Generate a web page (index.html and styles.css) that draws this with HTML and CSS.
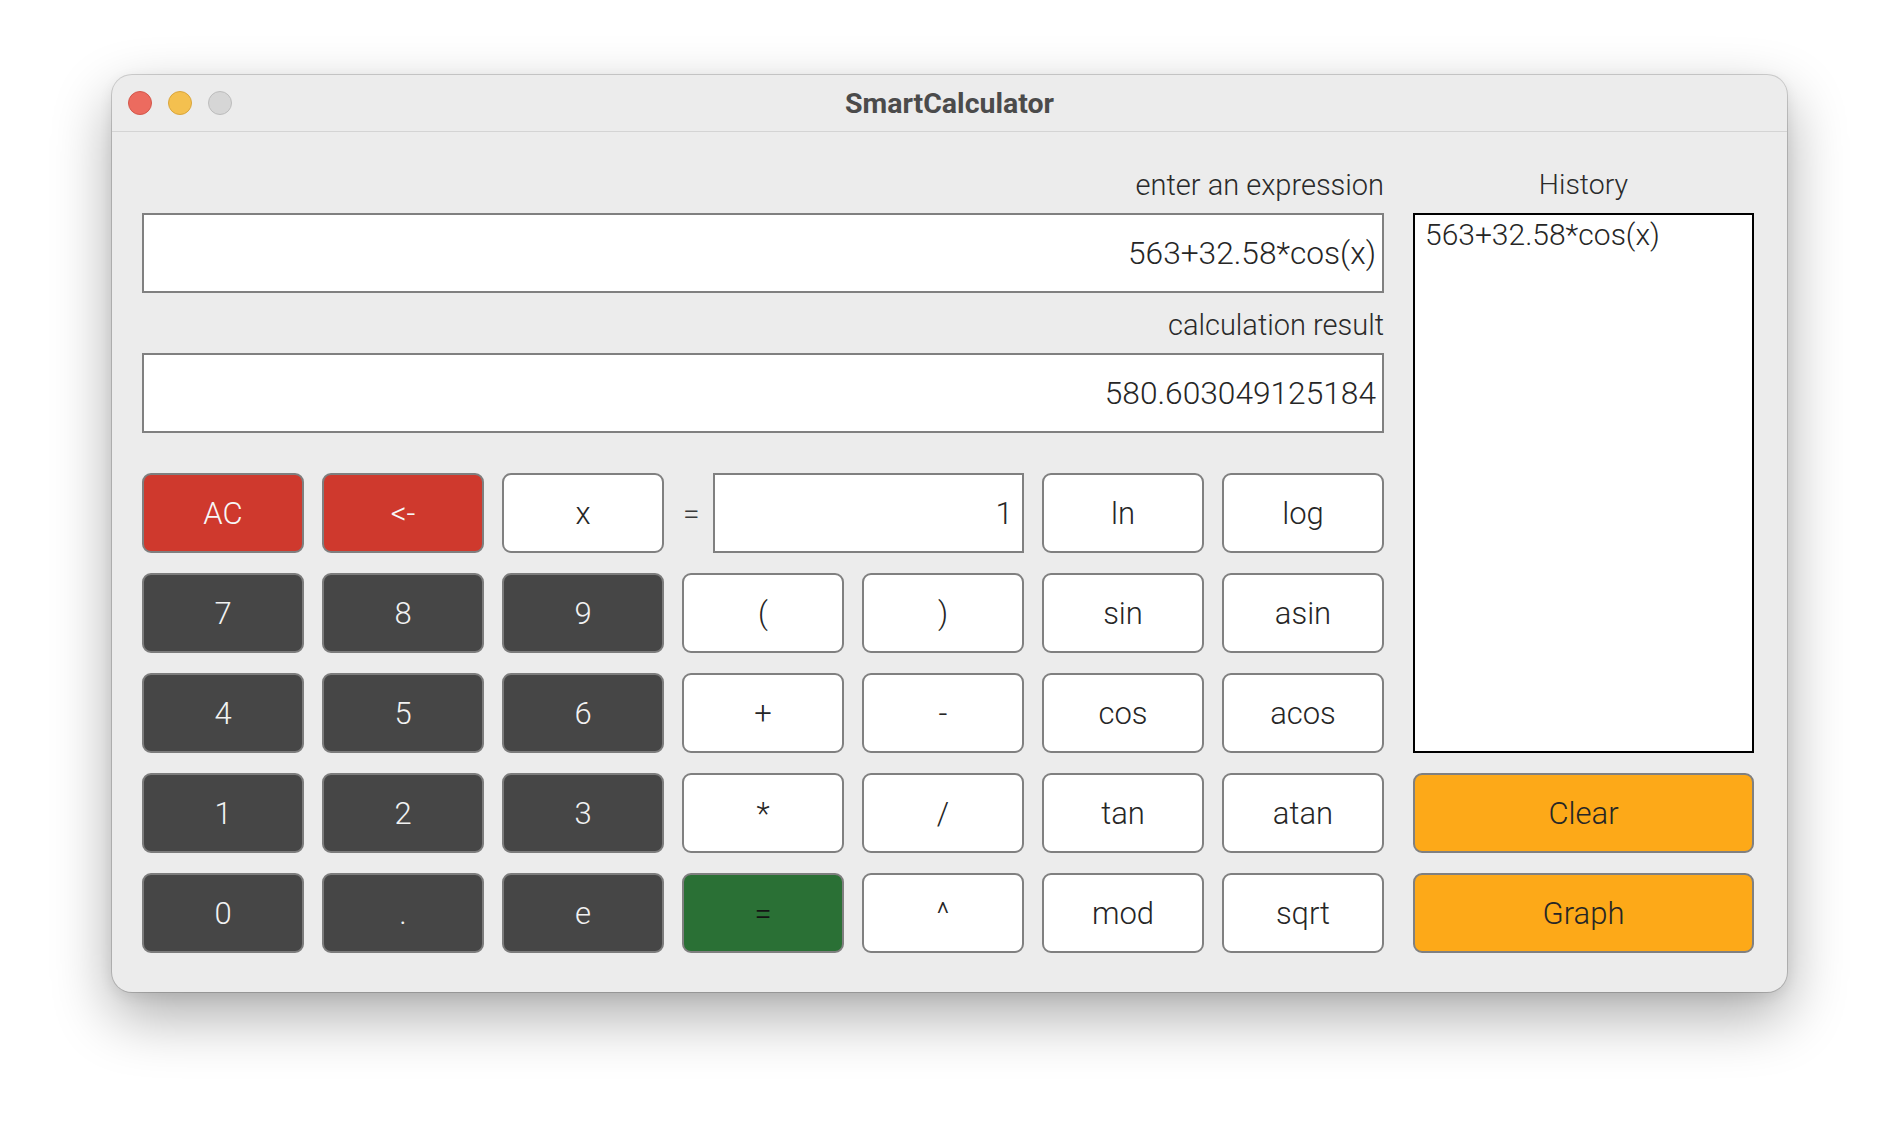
FILE: index.html
```html
<!DOCTYPE html>
<html>
<head>
<meta charset="utf-8">
<title>SmartCalculator</title>
<link rel="stylesheet" href="styles.css">
</head>
<body>
<div class="desktop">
  <div class="window">
    <div class="titlebar">
      <div class="lights">
        <span class="light light-red"></span>
        <span class="light light-yellow"></span>
        <span class="light light-gray"></span>
      </div>
      <div class="title">SmartCalculator</div>
      <div class="spacer"></div>
    </div>
    <div class="content">
      <div class="main">
        <div class="label">enter an expression</div>
        <div class="field">563+32.58*cos(x)</div>
        <div class="label label-second">calculation result</div>
        <div class="field">580.603049125184</div>
        <div class="keypad">
          <button class="key key-red">AC</button>
          <button class="key key-red">&lt;-</button>
          <button class="key key-white">x</button>
          <div class="xvalue">
            <span class="eq">=</span>
            <div class="xfield">1</div>
          </div>
          <button class="key key-white">ln</button>
          <button class="key key-white">log</button>

          <button class="key key-dark">7</button>
          <button class="key key-dark">8</button>
          <button class="key key-dark">9</button>
          <button class="key key-white">(</button>
          <button class="key key-white">)</button>
          <button class="key key-white">sin</button>
          <button class="key key-white">asin</button>

          <button class="key key-dark">4</button>
          <button class="key key-dark">5</button>
          <button class="key key-dark">6</button>
          <button class="key key-white">+</button>
          <button class="key key-white">-</button>
          <button class="key key-white">cos</button>
          <button class="key key-white">acos</button>

          <button class="key key-dark">1</button>
          <button class="key key-dark">2</button>
          <button class="key key-dark">3</button>
          <button class="key key-white">*</button>
          <button class="key key-white">/</button>
          <button class="key key-white">tan</button>
          <button class="key key-white">atan</button>

          <button class="key key-dark">0</button>
          <button class="key key-dark">.</button>
          <button class="key key-dark">e</button>
          <button class="key key-green">=</button>
          <button class="key key-white">^</button>
          <button class="key key-white">mod</button>
          <button class="key key-white">sqrt</button>
        </div>
      </div>
      <div class="side">
        <div class="label label-center">History</div>
        <div class="history">563+32.58*cos(x)</div>
        <button class="key key-orange side-key">Clear</button>
        <button class="key key-orange side-key">Graph</button>
      </div>
    </div>
  </div>
</div>
</body>
</html>
```

FILE: styles.css
```css
html, body {
  margin: 0;
  padding: 0;
  background: #ffffff;
}

body {
  font-family: Roboto, "Liberation Sans", sans-serif;
  font-weight: 300;
  color: #262626;
}

.desktop {
  width: 1898px;
  height: 1140px;
  box-sizing: border-box;
  padding: 75px 0 0 112px;
  overflow: hidden;
}

.window {
  width: 1675px;
  height: 917px;
  background: #ececec;
  border-radius: 20px;
  box-shadow: 0 0 0 1px rgba(0, 0, 0, 0.16), 0 24px 60px rgba(0, 0, 0, 0.33), 0 4px 14px rgba(0, 0, 0, 0.08);
  overflow: hidden;
}

.titlebar {
  height: 56px;
  border-bottom: 1px solid #d4d4d4;
  display: grid;
  grid-template-columns: 1fr auto 1fr;
  align-items: center;
}

.lights {
  display: flex;
  gap: 16px;
  padding-left: 16px;
}

.light {
  width: 24px;
  height: 24px;
  border-radius: 50%;
  box-sizing: border-box;
}

.light-red {
  background: #ec6b5f;
  border: 1px solid #d3574b;
}

.light-yellow {
  background: #f4c04f;
  border: 1px solid #d9a53c;
}

.light-gray {
  background: #d6d6d6;
  border: 1px solid #bcbcbc;
}

.title {
  font-family: Roboto, "Liberation Sans", sans-serif;
  font-weight: 700;
  font-size: 28.5px;
  color: #4b4b4b;
  padding-top: 1px;
}

.content {
  display: grid;
  grid-template-columns: 1242px 341px;
  column-gap: 29px;
  padding: 36px 33px 0 30px;
}

.main {
  display: flex;
  flex-direction: column;
}

.label {
  font-size: 29px;
  line-height: 34px;
  text-align: right;
  margin-bottom: 11px;
  color: #2a2a2a;
}

.label-second {
  margin-top: 15px;
}

.label-center {
  text-align: center;
  font-size: 28.5px;
}

.field {
  height: 80px;
  box-sizing: border-box;
  background: #ffffff;
  border: 2px solid #808080;
  display: flex;
  align-items: center;
  justify-content: flex-end;
  padding-right: 6px;
  font-size: 31.7px;
  color: #262626;
}

.keypad {
  margin-top: 40px;
  display: grid;
  grid-template-columns: repeat(7, 162px);
  grid-auto-rows: 80px;
  column-gap: 18px;
  row-gap: 20px;
}

.key {
  box-sizing: border-box;
  margin: 0;
  padding: 0;
  border: 2px solid #808080;
  border-radius: 9px;
  font-family: Roboto, "Liberation Sans", sans-serif;
  font-weight: 300;
  font-size: 31px;
  display: flex;
  align-items: center;
  justify-content: center;
  cursor: default;
}

.key-white {
  background: #ffffff;
  color: #262626;
}

.key-dark {
  background: #464646;
  color: #f2f2f2;
  border-color: #7c7c7c;
}

.key-red {
  background: #cf392d;
  color: #f7f7f7;
  border-color: #7f7f7f;
}

.key-green {
  background: #2a7035;
  color: #141414;
  border-color: #7f7f7f;
}

.key-orange {
  background: #fda918;
  color: #262626;
  border-color: #808080;
}

.xvalue {
  grid-column: span 2;
  display: flex;
  align-items: center;
}

.eq {
  width: 31px;
  padding-left: 1px;
  box-sizing: border-box;
  font-size: 30px;
  color: #3a3a3a;
}

.xfield {
  flex: 1;
  height: 80px;
  box-sizing: border-box;
  background: #ffffff;
  border: 2px solid #808080;
  display: flex;
  align-items: center;
  justify-content: flex-end;
  padding-right: 9px;
  font-size: 31.5px;
  color: #262626;
}

.side {
  display: flex;
  flex-direction: column;
}

.history {
  height: 540px;
  box-sizing: border-box;
  background: #ffffff;
  border: 2px solid #000000;
  padding: 2px 10px;
  font-size: 30px;
  color: #262626;
}

.side-key {
  height: 80px;
  margin-top: 20px;
  width: 100%;
}
```
